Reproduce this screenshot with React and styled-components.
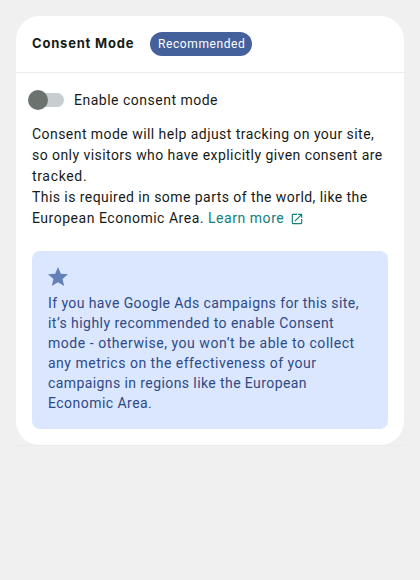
import React from "react";
import styled, { createGlobalStyle } from "styled-components";

const GlobalStyle = createGlobalStyle`
  *, *::before, *::after { box-sizing: border-box; }
  body {
    margin: 0;
    background: #f0f0f0;
    color: #161b18;
    font-family: Roboto, "Liberation Sans", sans-serif;
    font-size: 14px;
    font-weight: 400;
  }
`;

const Page = styled.main`
  min-height: 580px;
  padding: 16px;
`;

const Panel = styled.div`
  border-bottom: 1px solid #ebebeb;
`;

const Card = styled.section`
  background: #fff;
  border-radius: 24px;
  height: 429px;
  overflow: hidden;
`;

const Header = styled.header`
  display: flex;
  align-items: center;
  gap: 16px;
  height: 57px;
  padding: 0 16px;
  border-bottom: 1px solid #ebebeb;
`;

const Title = styled.h3`
  margin: 0;
  width: 102px;
  padding-bottom: 2px;
  font-family: Inter, Roboto, sans-serif;
  font-size: 13px;
  font-weight: 700;
  line-height: 20px;
  white-space: nowrap;
`;

const Badge = styled.span`
  display: flex;
  align-items: center;
  width: 102px;
  height: 24px;
  padding-left: 8px;
  border-radius: 12px;
  background: #44619b;
  color: #fff;
  font-size: 12px;
  white-space: nowrap;
`;

const Content = styled.div`
  padding: 16px;
`;

const SwitchRow = styled.label`
  display: flex;
  align-items: center;
  gap: 10px;
  height: 21px;
  margin-bottom: 14px;
`;

const Track = styled.span`
  display: flex;
  align-items: center;
  width: 32px;
  height: 14px;
  border-radius: 7px;
  background: #c8cdd0;
`;

const Thumb = styled.span`
  flex: none;
  width: 20px;
  height: 20px;
  margin-left: -4px;
  border-radius: 50%;
  background: #6c726e;
`;

const Paragraph = styled.p`
  margin: 0;
  line-height: ${(p) => p.$leading}px;
`;

const Line = styled.span`
  display: block;
  white-space: nowrap;
`;

const Tracked = styled.span`
  letter-spacing: ${(p) => p.$spacing}px;
`;

const Link = styled.a`
  color: #108080;
  text-decoration: none;
  margin-left: 4px;
`;

const LinkIcon = styled.svg`
  width: 14px;
  height: 14px;
  margin-left: 6px;
  vertical-align: -3px;
  fill: currentColor;
`;

const Callout = styled.aside`
  height: 178px;
  margin-top: 22px;
  padding: 14px 16px;
  border-radius: 8px;
  background: #dbe6ff;
  color: #2d4a86;
`;

const Star = styled.svg`
  display: block;
  width: 24px;
  height: 24px;
  margin: 0 0 4px -2px;
  fill: #6380b9;
`;

const intro = [
  ["Consent mode will help adjust tracking on your site,", 0.45],
  ["so only visitors who have explicitly given consent are", 0.445],
  ["tracked.", 0.66],
  ["This is required in some parts of the world, like the", 0.44],
];

const notice = [
  ["If you have Google Ads campaigns for this site,", 0.415],
  ["it’s highly recommended to enable Consent", 0.46],
  ["mode - otherwise, you won’t be able to collect", 0.54],
  ["any metrics on the effectiveness of your", 0.5],
  ["campaigns in regions like the European", 0.41],
  ["Economic Area.", 0.46],
];

function Lines({ items }) {
  return items.map(([text, spacing]) => (
    <Line key={text}>
      <Tracked $spacing={spacing}>{text}</Tracked>
    </Line>
  ));
}

export default function App() {
  return (
    <>
      <GlobalStyle />
      <Page>
        <Panel>
          <Card>
            <Header>
              <Title><Tracked $spacing={0.8}>Consent Mode</Tracked></Title>
              <Badge><Tracked $spacing={0.6}>Recommended</Tracked></Badge>
            </Header>
            <Content>
              <SwitchRow>
                <Track role="switch" aria-checked="false"><Thumb /></Track>
                <Tracked $spacing={0.5}>Enable consent mode</Tracked>
              </SwitchRow>
              <Paragraph $leading={21}>
                <Lines items={intro} />
                <Line>
                  <Tracked $spacing={0.52}>European Economic Area.</Tracked>
                  <Link href="#">
                    <Tracked $spacing={0.54}>Learn more</Tracked>
                    <LinkIcon viewBox="0 0 24 24" aria-hidden="true">
                      <path d="M19 19H5V5h7V3H5a2 2 0 0 0-2 2v14a2 2 0 0 0 2 2h14c1.100 0 2-.9 2-2v-7h-2v7zM14 3v2h3.590l-9.830 9.830 1.410 1.410L19 6.410V10h2V3h-7z" />
                    </LinkIcon>
                  </Link>
                </Line>
              </Paragraph>
              <Callout>
                <Star viewBox="0 0 24 24" aria-hidden="true">
                  <path d="M12 17.270 18.180 21l-1.640-7.030L22 9.240l-7.190-.61L12 2 9.190 8.630 2 9.240l5.460 4.730L5.820 21z" />
                </Star>
                <Paragraph $leading={20}>
                  <Lines items={notice} />
                </Paragraph>
              </Callout>
            </Content>
          </Card>
        </Panel>
      </Page>
    </>
  );
}
